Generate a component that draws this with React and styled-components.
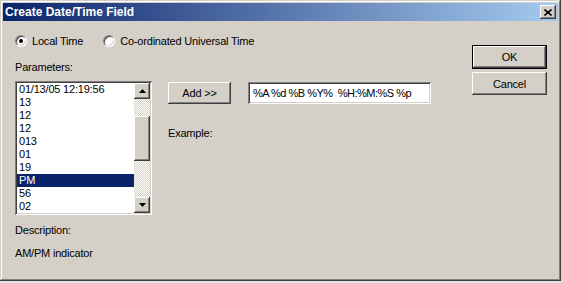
import React from "react";
import styled, { createGlobalStyle } from "styled-components";

const GlobalStyle = createGlobalStyle`
  body {
    margin: 0;
    background: #e4e4e4;
    font-family: "Liberation Sans", Arial, sans-serif;
    font-size: 11px;
    letter-spacing: -0.2px;
    color: #000;
  }
`;

const raised = `
  box-shadow: inset -1px -1px #404040, inset 1px 1px #ffffff,
    inset -2px -2px #808080, inset 2px 2px #d4d0c8;
`;

const sunken = `
  box-shadow: inset 1px 1px #808080, inset -1px -1px #ffffff,
    inset 2px 2px #404040, inset -2px -2px #d4d0c8;
`;

const Window = styled.div`
  width: 561px;
  height: 281px;
  box-sizing: border-box;
  padding: 3px;
  background: #d4d0c8;
  display: flex;
  flex-direction: column;
  box-shadow: inset -1px -1px #404040, inset 1px 1px #d4d0c8,
    inset -2px -2px #808080, inset 2px 2px #ffffff;
`;

const TitleBar = styled.div`
  height: 18px;
  flex-shrink: 0;
  display: flex;
  align-items: center;
  justify-content: space-between;
  padding: 0 2px 0 2px;
  background: linear-gradient(to right, #0a246a, #a6caf0);
`;

const Title = styled.span`
  color: #fff;
  font-weight: bold;
  font-size: 12px;
  letter-spacing: 0;
`;

const CloseButton = styled.div`
  width: 16px;
  height: 14px;
  background: #d4d0c8;
  display: flex;
  align-items: center;
  justify-content: center;
  ${raised}
`;

const Body = styled.div`
  flex: 1;
  display: flex;
  justify-content: space-between;
  padding: 13px 11px 0 12px;
`;

const MainColumn = styled.div`
  display: flex;
  flex-direction: column;
`;

const RadioRow = styled.div`
  display: flex;
  align-items: center;
  gap: 20px;
  height: 14px;
`;

const RadioItem = styled.label`
  display: flex;
  align-items: center;
  gap: 5px;
`;

const RadioCircle = styled.span`
  width: 12px;
  height: 12px;
  box-sizing: border-box;
  border-radius: 50%;
  border: 1px solid;
  border-color: #808080 #ffffff #ffffff #808080;
  box-shadow: inset 1px 1px #404040, inset -1px -1px #d4d0c8;
  background: #fff;
  display: flex;
  align-items: center;
  justify-content: center;

  &::after {
    content: "";
    width: 4px;
    height: 4px;
    border-radius: 50%;
    background: ${({ $checked }) => ($checked ? "#000" : "transparent")};
  }
`;

const Label = styled.div`
  line-height: 13px;
  margin-top: ${({ $top }) => $top}px;
`;

const ContentRow = styled.div`
  display: flex;
  gap: 16px;
  margin-top: 7px;
`;

const ListBox = styled.div`
  width: 137px;
  height: 134px;
  box-sizing: border-box;
  padding: 2px;
  background: #fff;
  display: flex;
  ${sunken}
`;

const Items = styled.div`
  flex: 1;
  display: flex;
  flex-direction: column;
`;

const Item = styled.div`
  height: 13px;
  line-height: 13px;
  padding-left: 2px;
  background: ${({ $selected }) => ($selected ? "#0a246a" : "transparent")};
  color: ${({ $selected }) => ($selected ? "#fff" : "#000")};
`;

const ScrollBar = styled.div`
  width: 16px;
  display: flex;
  flex-direction: column;
`;

const ScrollButton = styled.div`
  width: 16px;
  height: 16px;
  background: #d4d0c8;
  display: flex;
  align-items: center;
  justify-content: center;
  ${raised}
`;

const Track = styled.div`
  flex: 1;
  background: repeating-conic-gradient(#ffffff 0 25%, #d4d0c8 0 50%) 0 0 / 2px 2px;
  padding-top: 17px;
`;

const Thumb = styled.div`
  height: 45px;
  background: #d4d0c8;
  ${raised}
`;

const Middle = styled.div`
  display: flex;
  flex-direction: column;
  padding-top: 1px;
`;

const AddRow = styled.div`
  display: flex;
  gap: 17px;
`;

const Button = styled.div`
  width: ${({ $w }) => $w}px;
  height: ${({ $h }) => $h}px;
  box-sizing: border-box;
  display: flex;
  align-items: center;
  justify-content: center;
  background: #d4d0c8;
  ${({ $default }) =>
    $default
      ? `box-shadow: inset 0 0 0 1px #000, inset -2px -2px #404040, inset 2px 2px #ffffff,
    inset -3px -3px #808080, inset 3px 3px #d4d0c8;`
      : raised}
`;

const TextField = styled.div`
  width: 183px;
  height: 22px;
  box-sizing: border-box;
  padding: 0 5px;
  display: flex;
  align-items: center;
  background: #fff;
  white-space: pre;
  letter-spacing: -0.5px;
  ${sunken}
`;

const SideColumn = styled.div`
  display: flex;
  flex-direction: column;
  gap: 3px;
  padding-top: 11px;
`;

const Arrow = ({ up }) => (
  <svg width="7" height="4" viewBox="0 0 7 4">
    <path d={up ? "M3.5 0 L7 4 L0 4 Z" : "M0 0 L7 0 L3.5 4 Z"} fill="#000" />
  </svg>
);

const items = [
  "01/13/05 12:19:56",
  "13",
  "12",
  "12",
  "013",
  "01",
  "19",
  "PM",
  "56",
  "02",
];

const App = () => (
  <>
    <GlobalStyle />
    <Window>
      <TitleBar>
        <Title>Create Date/Time Field</Title>
        <CloseButton>
          <svg width="8" height="7" viewBox="0 0 8 7">
            <path d="M0.5 0.5 L7.5 6.5 M7.5 0.5 L0.5 6.5" stroke="#000" strokeWidth="1.6" />
          </svg>
        </CloseButton>
      </TitleBar>
      <Body>
        <MainColumn>
          <RadioRow>
            <RadioItem>
              <RadioCircle $checked />
              Local Time
            </RadioItem>
            <RadioItem>
              <RadioCircle />
              Co-ordinated Universal Time
            </RadioItem>
          </RadioRow>
          <Label $top={13}>Parameters:</Label>
          <ContentRow>
            <ListBox>
              <Items>
                {items.map((it, i) => (
                  <Item key={i} $selected={it === "PM"}>
                    {it}
                  </Item>
                ))}
              </Items>
              <ScrollBar>
                <ScrollButton>
                  <Arrow up />
                </ScrollButton>
                <Track>
                  <Thumb />
                </Track>
                <ScrollButton>
                  <Arrow />
                </ScrollButton>
              </ScrollBar>
            </ListBox>
            <Middle>
              <AddRow>
                <Button $w={63} $h={22}>Add &gt;&gt;</Button>
                <TextField>%A %d %B %Y%  %H:%M:%S %p</TextField>
              </AddRow>
              <Label $top={23}>Example:</Label>
            </Middle>
          </ContentRow>
          <Label $top={9}>Description:</Label>
          <Label $top={10}>AM/PM indicator</Label>
        </MainColumn>
        <SideColumn>
          <Button $w={75} $h={24} $default>OK</Button>
          <Button $w={75} $h={23}>Cancel</Button>
        </SideColumn>
      </Body>
    </Window>
  </>
);

export default App;
